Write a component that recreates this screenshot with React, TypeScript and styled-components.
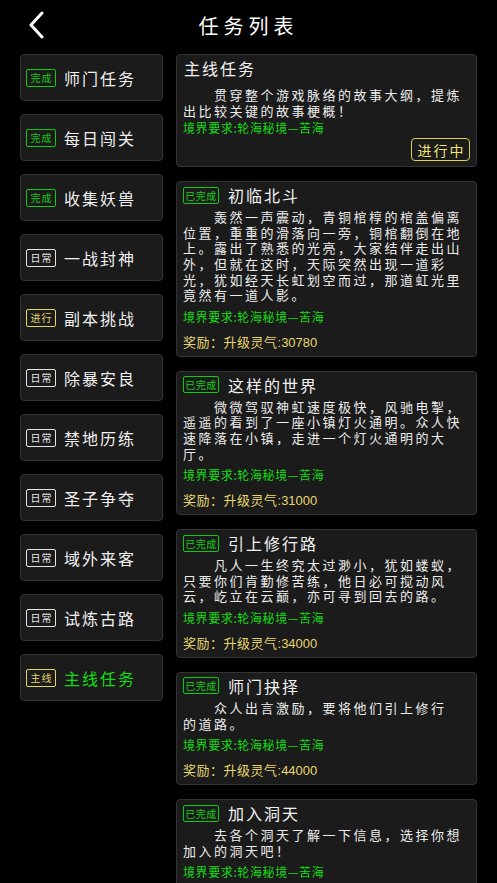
import styled, { createGlobalStyle } from "styled-components";

type TagKind = "done" | "daily" | "doing" | "main";

type Category = {
  tag: string;
  kind: TagKind;
  name: string;
  active?: boolean;
};

type Quest = {
  title: string;
  done: boolean;
  text: string;
  reward?: string;
};

const categories: Array<Category> = [
  { tag: "完成", kind: "done", name: "师门任务" },
  { tag: "完成", kind: "done", name: "每日闯关" },
  { tag: "完成", kind: "done", name: "收集妖兽" },
  { tag: "日常", kind: "daily", name: "一战封神" },
  { tag: "进行", kind: "doing", name: "副本挑战" },
  { tag: "日常", kind: "daily", name: "除暴安良" },
  { tag: "日常", kind: "daily", name: "禁地历练" },
  { tag: "日常", kind: "daily", name: "圣子争夺" },
  { tag: "日常", kind: "daily", name: "域外来客" },
  { tag: "日常", kind: "daily", name: "试炼古路" },
  { tag: "主线", kind: "main", name: "主线任务", active: true },
];

const quests: Array<Quest> = [
  {
    title: "初临北斗",
    done: true,
    text: "轰然一声震动，青铜棺椁的棺盖偏离位置，重重的滑落向一旁，铜棺翻倒在地上。露出了熟悉的光亮，大家结伴走出山外，但就在这时，天际突然出现一道彩光，犹如经天长虹划空而过，那道虹光里竟然有一道人影。",
    reward: "30780",
  },
  {
    title: "这样的世界",
    done: true,
    text: "微微驾驭神虹速度极快，风驰电掣，遥遥的看到了一座小镇灯火通明。众人快速降落在小镇，走进一个灯火通明的大厅。",
    reward: "31000",
  },
  {
    title: "引上修行路",
    done: true,
    text: "凡人一生终究太过渺小，犹如蝼蚁，只要你们肯勤修苦练，他日必可搅动风云，屹立在云巅，亦可寻到回去的路。",
    reward: "34000",
  },
  {
    title: "师门抉择",
    done: true,
    text: "众人出言激励，要将他们引上修行\n的道路。",
    reward: "44000",
  },
  {
    title: "加入洞天",
    done: true,
    text: "去各个洞天了解一下信息，选择你想加入的洞天吧！",
    reward: "45000",
  },
];

const tagColors: Record<TagKind, string> = {
  done: "#12c912",
  daily: "#e6e6e6",
  doing: "#e2d766",
  main: "#e2d766",
};

const GlobalStyle = createGlobalStyle`
  html, body {
    margin: 0;
    height: 100%;
    overflow: hidden;
    background: #000;
  }
  body {
    font-family: "Noto Sans CJK SC", "Noto Sans", sans-serif;
    color: #eee;
  }
`;

const Page = styled.div`
  height: 100vh;
  display: flex;
  flex-direction: column;
  background: #000;
`;

const Header = styled.header`
  height: 50px;
  flex-shrink: 0;
  display: grid;
  grid-template-columns: 1fr auto 1fr;
  align-items: center;
  padding: 0 20px;
`;

const BackButton = styled.button`
  justify-self: start;
  background: none;
  border: 0;
  padding: 0 0 0 7px;
  display: flex;
  align-items: center;
  cursor: pointer;
`;

const HeaderTitle = styled.h1`
  margin: 0;
  font-size: 20px;
  font-weight: 400;
  letter-spacing: 5px;
  color: #fff;
`;

const Body = styled.main`
  flex: 1;
  min-height: 0;
  display: flex;
  align-items: flex-start;
  gap: 13px;
  padding: 4px 20px 0;
`;

const Sidebar = styled.nav`
  width: 143px;
  flex-shrink: 0;
  display: flex;
  flex-direction: column;
  gap: 13px;
`;

const CategoryCard = styled.div`
  height: 47px;
  box-sizing: border-box;
  display: flex;
  align-items: center;
  gap: 8px;
  padding-left: 5px;
  background: #1b1b1b;
  border: 1px solid #333;
  border-radius: 4px;
`;

const Tag = styled.span<{ $kind: TagKind }>`
  width: 30px;
  height: 18px;
  box-sizing: border-box;
  display: flex;
  align-items: center;
  justify-content: center;
  border: 1.5px solid ${(p) => tagColors[p.$kind]};
  border-radius: 2px;
  color: ${(p) => tagColors[p.$kind]};
  font-size: 10px;
  letter-spacing: 1px;
  padding-left: 1px;
`;

const CategoryName = styled.span<{ $active?: boolean }>`
  font-size: 16px;
  letter-spacing: 2px;
  color: ${(p) => (p.$active ? "#10dd10" : "#f0f0f0")};
`;

const QuestList = styled.section`
  flex: 1;
  min-width: 0;
  display: flex;
  flex-direction: column;
  gap: 14px;
`;

const QuestCard = styled.article`
  display: flex;
  flex-direction: column;
  padding: 3px 6px 5px;
  background: #1b1b1b;
  border: 1px solid #333;
  border-radius: 4px;
`;

const TitleRow = styled.div`
  height: 20px;
  display: flex;
  align-items: center;
  gap: 9px;
`;

const DoneBadge = styled.span`
  width: 36px;
  height: 17px;
  box-sizing: border-box;
  display: flex;
  align-items: center;
  justify-content: center;
  border: 1.5px solid #12c912;
  border-radius: 2px;
  color: #12d012;
  font-size: 10px;
  letter-spacing: 0.5px;
`;

const QuestTitle = styled.h2<{ $plain?: boolean }>`
  margin: 0;
  font-size: 16px;
  font-weight: 400;
  letter-spacing: 2px;
  color: #f2f2f2;
  padding-left: ${(p) => (p.$plain ? "1px" : "0")};
`;

const Desc = styled.p<{ $top: number }>`
  margin: ${(p) => p.$top}px 0 0;
  font-size: 13px;
  line-height: 15.6px;
  letter-spacing: 2.5px;
  text-indent: 31px;
  white-space: pre-line;
  color: #ececec;
`;

const Realm = styled.div<{ $top: number }>`
  margin-top: ${(p) => p.$top}px;
  font-size: 12px;
  line-height: 16px;
  letter-spacing: 0.6px;
  color: #14dd14;
`;

const Reward = styled.div`
  margin-top: 9px;
  font-size: 13px;
  line-height: 16px;
  letter-spacing: 0.5px;
  color: #e6d670;
`;

const Amount = styled.span`
  font-family: "Liberation Sans", "Noto Sans", sans-serif;
  letter-spacing: 0;
`;

const Footer = styled.div`
  margin-top: 2px;
  display: flex;
  justify-content: flex-end;
`;

const StatusButton = styled.button`
  width: 59px;
  height: 23px;
  padding: 0 0 0 2px;
  background: transparent;
  border: 1.5px solid #d9ce5c;
  border-radius: 4px;
  color: #f0e27a;
  font-family: inherit;
  font-size: 14px;
  letter-spacing: 2px;
`;

function BackIcon() {
  return (
    <svg width="18" height="28" viewBox="0 0 18 28" fill="none">
      <path
        d="M15 2 L4 14 L15 26"
        stroke="#fff"
        strokeWidth="3"
        strokeLinecap="round"
        strokeLinejoin="round"
      />
    </svg>
  );
}

const REALM = "境界要求:轮海秘境—苦海";

export default function App() {
  return (
    <>
      <GlobalStyle />
      <Page>
        <Header>
          <BackButton aria-label="返回">
            <BackIcon />
          </BackButton>
          <HeaderTitle>任务列表</HeaderTitle>
          <span />
        </Header>

        <Body>
          <Sidebar>
            {categories.map((c) => (
              <CategoryCard key={c.name}>
                <Tag $kind={c.kind}>{c.tag}</Tag>
                <CategoryName $active={c.active}>{c.name}</CategoryName>
              </CategoryCard>
            ))}
          </Sidebar>

          <QuestList>
            <QuestCard>
              <TitleRow>
                <QuestTitle $plain>主线任务</QuestTitle>
              </TitleRow>
              <Desc $top={9}>贯穿整个游戏脉络的故事大纲，提炼出比较关键的故事梗概！</Desc>
              <Realm $top={2}>{REALM}</Realm>
              <Footer>
                <StatusButton>进行中</StatusButton>
              </Footer>
            </QuestCard>

            {quests.map((q) => (
              <QuestCard key={q.title}>
                <TitleRow>
                  {q.done && <DoneBadge>已完成</DoneBadge>}
                  <QuestTitle>{q.title}</QuestTitle>
                </TitleRow>
                <Desc $top={4}>{q.text}</Desc>
                <Realm $top={6}>{REALM}</Realm>
                {q.reward && (
                  <Reward>
                    奖励：升级灵气<Amount>:{q.reward}</Amount>
                  </Reward>
                )}
              </QuestCard>
            ))}
          </QuestList>
        </Body>
      </Page>
    </>
  );
}
